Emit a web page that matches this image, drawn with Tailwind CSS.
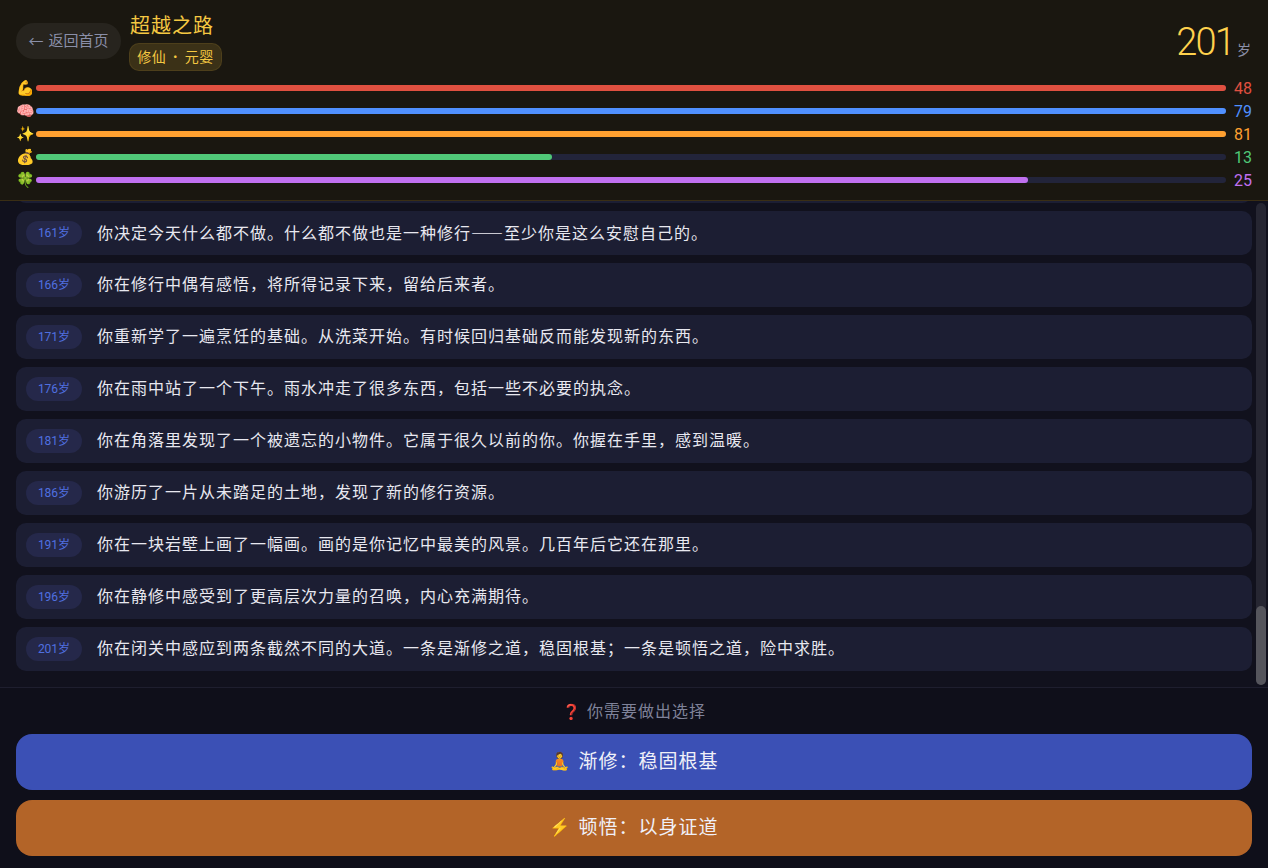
<!DOCTYPE html>
<html lang="zh-CN">
<head>
<meta charset="utf-8">
<script src="https://cdn.jsdelivr.net/npm/@tailwindcss/browser@4"></script>
</head>
<body class="m-0 bg-[#0f0f1a] font-['Roboto','Noto_Sans_CJK_SC',sans-serif] text-white">
<div class="flex h-[868px] w-[1268px] flex-col overflow-hidden">
  <header class="h-[201px] shrink-0 border-b border-[#3a2e14] bg-[#1a1710] px-4 pt-3">
    <div class="flex h-[64px] items-start justify-between">
      <div class="flex items-start gap-2">
        <div class="mt-[11px] flex h-[36px] w-[105px] items-center justify-center rounded-full bg-white/[0.06] pt-[1px] text-[15px] text-[#8a8fa8]"><span class="font-['Noto_Sans_CJK_SC']">←</span><span class="ml-[5px]">返回首页</span></div>
        <div>
          <div class="pt-[1px] pl-[1px] text-xl leading-[26px] tracking-[1px] text-[#f5c842]">超越之路</div>
          <div class="mt-[4px] flex h-[28px] w-[93px] items-center justify-center rounded-[10px] border border-[#f5c842]/10 bg-[#f5c842]/15 text-sm tracking-[0.5px] text-[#f5c842]"><span>修仙</span><span class="mx-[3px] font-['Noto_Sans_CJK_SC'] text-xs">·</span><span>元婴</span></div>
        </div>
      </div>
      <div class="flex items-baseline gap-[3px] pr-[1px]"><span class="pt-[1px] text-[38px] leading-[58px] font-light tracking-[-1.8px] text-[#ffd24d]">201</span><span class="text-sm text-[#8a8fa8]">岁</span></div>
    </div>
    <div class="mt-[3px] flex flex-col gap-[5px]">
      <div class="flex h-[18px] items-center gap-[5px]"><span class="w-[15px] text-center text-[15px] leading-none">💪</span><div class="h-[6px] flex-1 rounded-full bg-[#22243a]"><div class="h-full w-full rounded-full bg-[#e05040]"></div></div><span class="w-[21px] pt-[1px] text-right text-base text-[#e05040]">48</span></div>
      <div class="flex h-[18px] items-center gap-[5px]"><span class="w-[15px] text-center text-[15px] leading-none">🧠</span><div class="h-[6px] flex-1 rounded-full bg-[#22243a]"><div class="h-full w-full rounded-full bg-[#5090ff]"></div></div><span class="w-[21px] pt-[1px] text-right text-base text-[#5090ff]">79</span></div>
      <div class="flex h-[18px] items-center gap-[5px]"><span class="w-[15px] text-center text-[15px] leading-none">✨</span><div class="h-[6px] flex-1 rounded-full bg-[#22243a]"><div class="h-full w-full rounded-full bg-[#ffa030]"></div></div><span class="w-[21px] pt-[1px] text-right text-base text-[#ffa030]">81</span></div>
      <div class="flex h-[18px] items-center gap-[5px]"><span class="w-[15px] text-center text-[15px] leading-none">💰</span><div class="h-[6px] flex-1 rounded-full bg-[#22243a]"><div class="h-full w-[43.4%] rounded-full bg-[#50c878]"></div></div><span class="w-[21px] pt-[1px] text-right text-base text-[#50c878]">13</span></div>
      <div class="flex h-[18px] items-center gap-[5px]"><span class="w-[15px] text-center text-[15px] leading-none">🍀</span><div class="h-[6px] flex-1 rounded-full bg-[#22243a]"><div class="h-full w-[83.4%] rounded-full bg-[#c070f0]"></div></div><span class="w-[21px] pt-[1px] text-right text-base text-[#c070f0]">25</span></div>
    </div>
  </header>

  <main class="relative h-[487px] shrink-0 overflow-hidden border-b border-[#1e1e2e] bg-[#11111d]">
    <div class="flex flex-col gap-2 px-4">
      <div class="-mt-[42px] h-[44px] rounded-[10px] bg-[#1c1e33]"></div>
      <div class="flex h-[44px] items-center gap-[15px] rounded-[10px] bg-[#1c1e33] px-[10px] text-base tracking-[1px] text-[#e8e8f0]"><span class="flex h-6 w-14 items-center justify-center rounded-full bg-[#25284a] text-xs tracking-normal text-[#5070e0]">161岁</span><span class="-mt-[1px]">你决定今天什么都不做。什么都不做也是一种修行<span class="font-['Noto_Sans_CJK_SC']">——</span>至少你是这么安慰自己的。</span></div>
      <div class="flex h-[44px] items-center gap-[15px] rounded-[10px] bg-[#1c1e33] px-[10px] text-base tracking-[1px] text-[#e8e8f0]"><span class="flex h-6 w-14 items-center justify-center rounded-full bg-[#25284a] text-xs tracking-normal text-[#5070e0]">166岁</span><span class="-mt-[1px]">你在修行中偶有感悟，将所得记录下来，留给后来者。</span></div>
      <div class="flex h-[44px] items-center gap-[15px] rounded-[10px] bg-[#1c1e33] px-[10px] text-base tracking-[1px] text-[#e8e8f0]"><span class="flex h-6 w-14 items-center justify-center rounded-full bg-[#25284a] text-xs tracking-normal text-[#5070e0]">171岁</span><span class="-mt-[1px]">你重新学了一遍烹饪的基础。从洗菜开始。有时候回归基础反而能发现新的东西。</span></div>
      <div class="flex h-[44px] items-center gap-[15px] rounded-[10px] bg-[#1c1e33] px-[10px] text-base tracking-[1px] text-[#e8e8f0]"><span class="flex h-6 w-14 items-center justify-center rounded-full bg-[#25284a] text-xs tracking-normal text-[#5070e0]">176岁</span><span class="-mt-[1px]">你在雨中站了一个下午。雨水冲走了很多东西，包括一些不必要的执念。</span></div>
      <div class="flex h-[44px] items-center gap-[15px] rounded-[10px] bg-[#1c1e33] px-[10px] text-base tracking-[1px] text-[#e8e8f0]"><span class="flex h-6 w-14 items-center justify-center rounded-full bg-[#25284a] text-xs tracking-normal text-[#5070e0]">181岁</span><span class="-mt-[1px]">你在角落里发现了一个被遗忘的小物件。它属于很久以前的你。你握在手里，感到温暖。</span></div>
      <div class="flex h-[44px] items-center gap-[15px] rounded-[10px] bg-[#1c1e33] px-[10px] text-base tracking-[1px] text-[#e8e8f0]"><span class="flex h-6 w-14 items-center justify-center rounded-full bg-[#25284a] text-xs tracking-normal text-[#5070e0]">186岁</span><span class="-mt-[1px]">你游历了一片从未踏足的土地，发现了新的修行资源。</span></div>
      <div class="flex h-[44px] items-center gap-[15px] rounded-[10px] bg-[#1c1e33] px-[10px] text-base tracking-[1px] text-[#e8e8f0]"><span class="flex h-6 w-14 items-center justify-center rounded-full bg-[#25284a] text-xs tracking-normal text-[#5070e0]">191岁</span><span class="-mt-[1px]">你在一块岩壁上画了一幅画。画的是你记忆中最美的风景。几百年后它还在那里。</span></div>
      <div class="flex h-[44px] items-center gap-[15px] rounded-[10px] bg-[#1c1e33] px-[10px] text-base tracking-[1px] text-[#e8e8f0]"><span class="flex h-6 w-14 items-center justify-center rounded-full bg-[#25284a] text-xs tracking-normal text-[#5070e0]">196岁</span><span class="-mt-[1px]">你在静修中感受到了更高层次力量的召唤，内心充满期待。</span></div>
      <div class="flex h-[44px] items-center gap-[15px] rounded-[10px] bg-[#1c1e33] px-[10px] text-base tracking-[1px] text-[#e8e8f0]"><span class="flex h-6 w-14 items-center justify-center rounded-full bg-[#25284a] text-xs tracking-normal text-[#5070e0]">201岁</span><span class="-mt-[1px]">你在闭关中感应到两条截然不同的大道。一条是渐修之道，稳固根基；一条是顿悟之道，险中求胜。</span></div>
    </div>
    <div class="absolute right-[2px] top-[2px] h-[482px] w-[10px] rounded-full bg-[#262632]"><div class="absolute bottom-0 h-[79px] w-full rounded-full bg-[#55555c]"></div></div>
  </main>

  <footer class="flex-1 px-4">
    <div class="flex h-[46px] items-center justify-center gap-[6px] pt-[2px] text-base tracking-[1px] text-[#7f8299]"><span class="text-[15px] tracking-normal">❓</span><span>你需要做出选择</span></div>
    <button class="flex h-[56px] w-full items-center justify-center gap-[8px] rounded-2xl bg-[#3b50b5] text-[19px] tracking-[1px] text-[#f0f0f8]"><span class="text-[17px] tracking-normal">🧘</span><span>渐修：稳固根基</span></button>
    <button class="mt-[10px] flex h-[56px] w-full items-center justify-center gap-[8px] rounded-2xl bg-[#b36428] text-[19px] tracking-[1px] text-[#f0f0f8]"><span class="text-[17px] tracking-normal">⚡</span><span>顿悟：以身证道</span></button>
  </footer>
</div>
</body>
</html>
